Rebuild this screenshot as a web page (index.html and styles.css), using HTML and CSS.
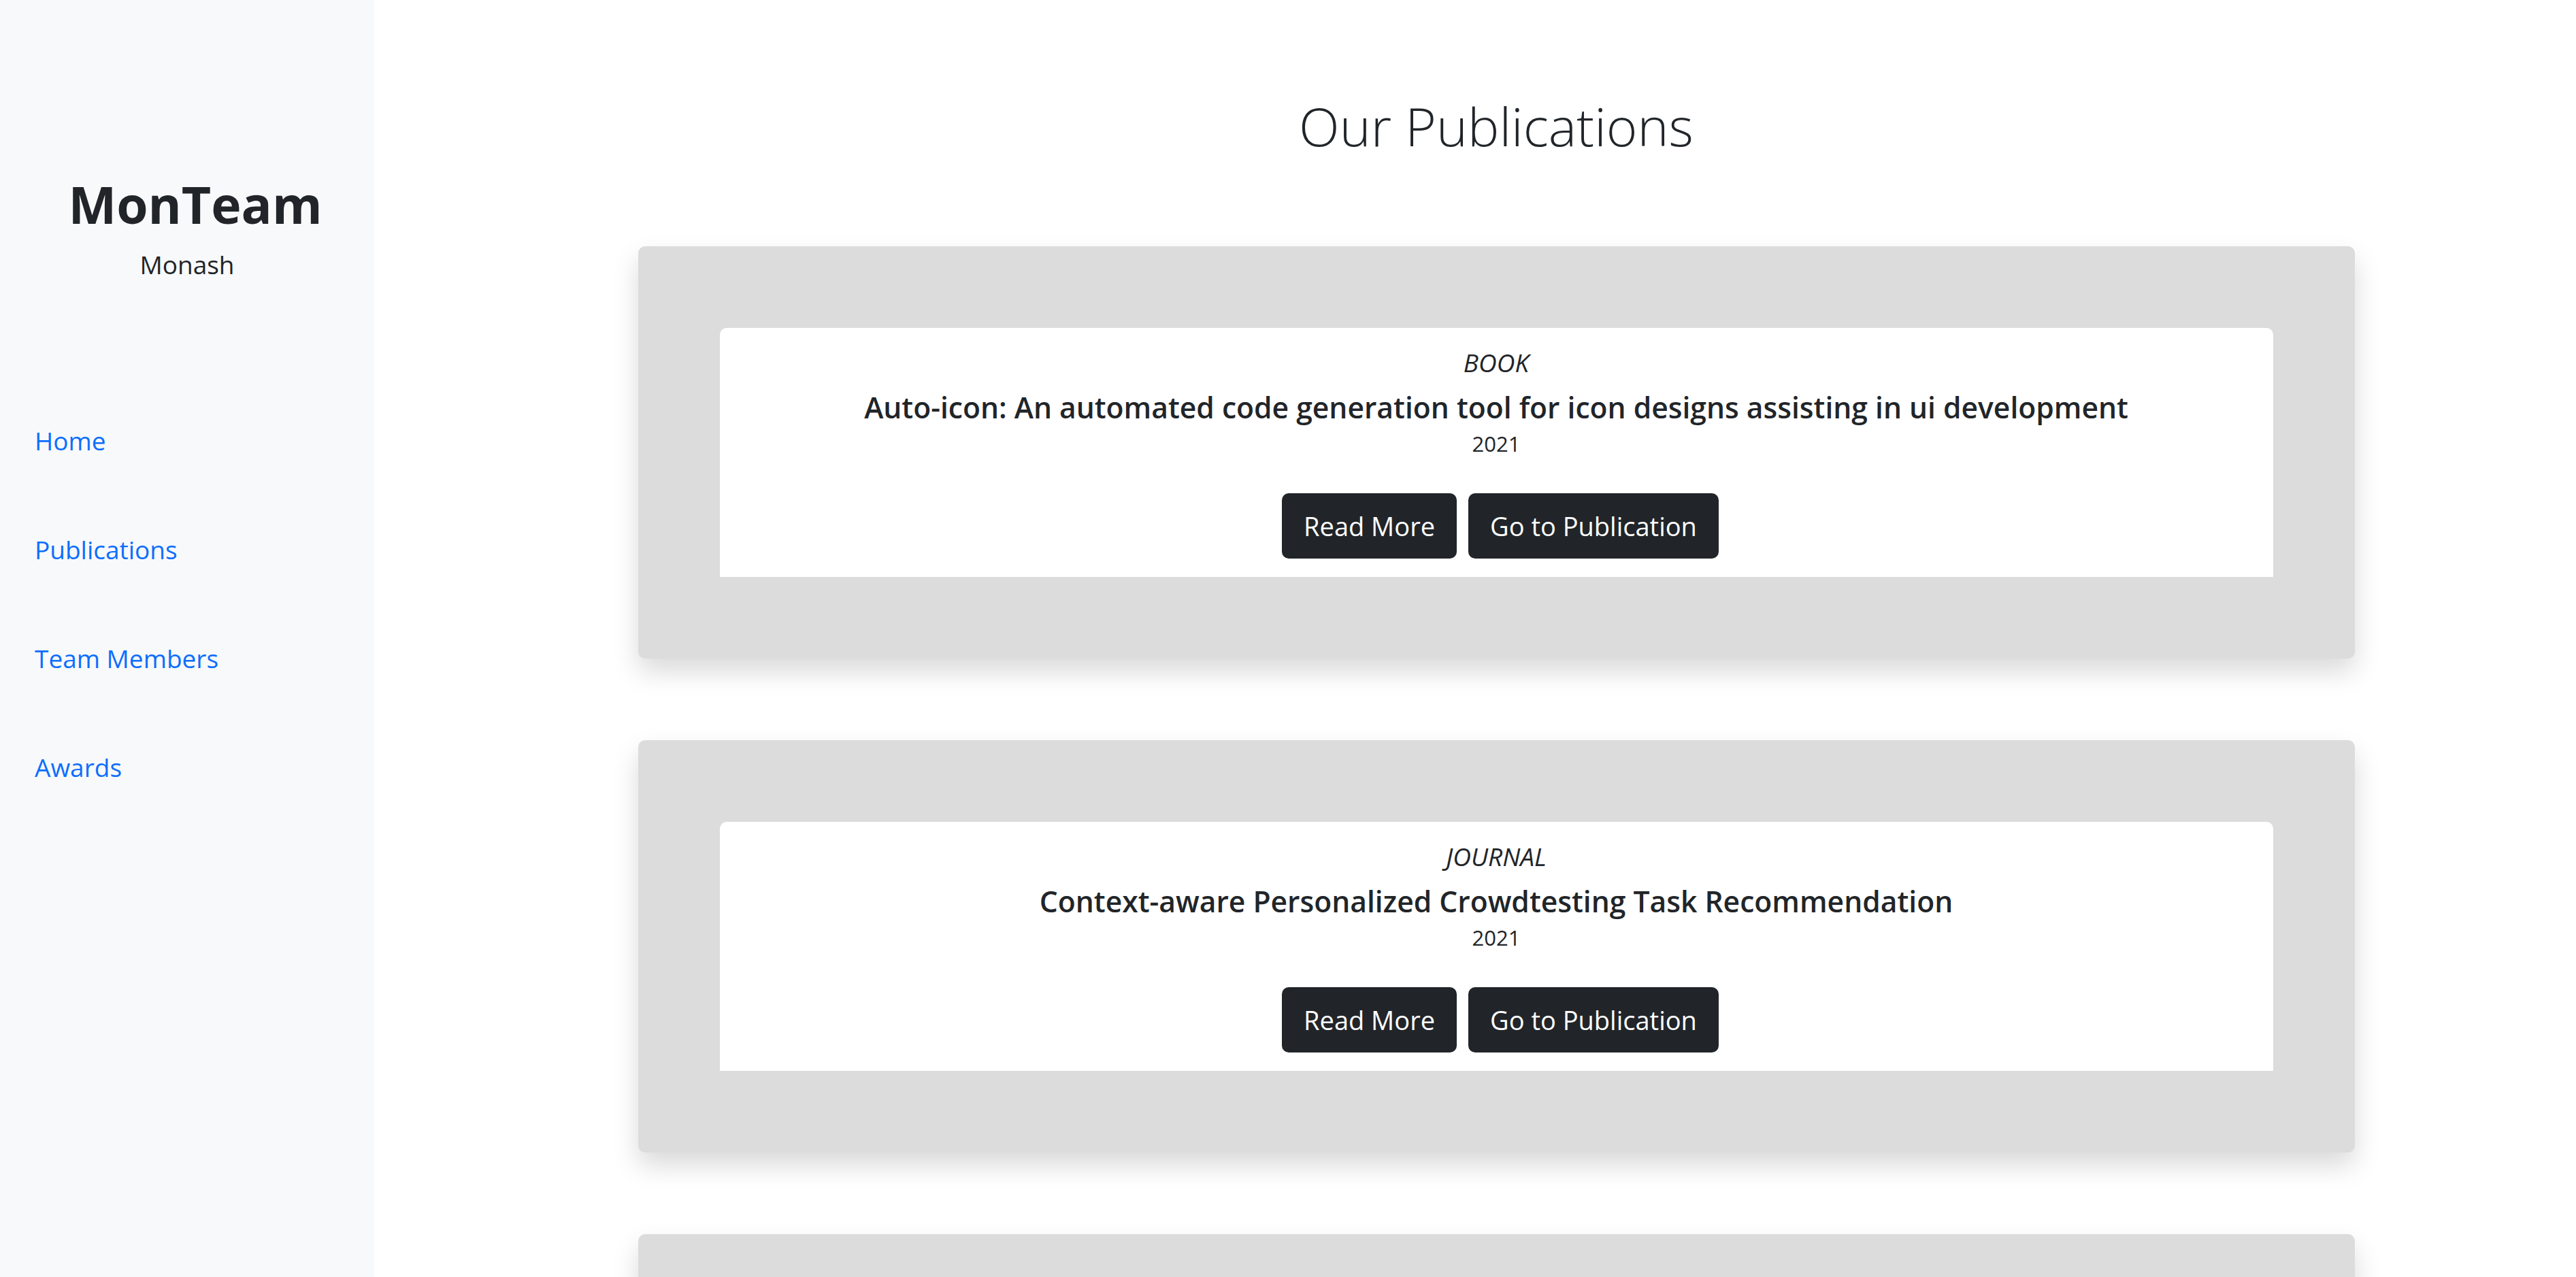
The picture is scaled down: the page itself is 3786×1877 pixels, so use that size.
FILE: index.html
```html
<!DOCTYPE html>
<html lang="en">
<head>
<meta charset="utf-8">
<title>MonTeam - Our Publications</title>
<link rel="stylesheet" href="styles.css">
</head>
<body>
<div class="layout">
  <aside class="sidebar">
    <div class="brand">
      <div class="brand-name">MonTeam</div>
      <div class="brand-sub">Monash</div>
    </div>
    <nav class="nav">
      <a class="nav-link" href="#">Home</a>
      <a class="nav-link" href="#">Publications</a>
      <a class="nav-link" href="#">Team Members</a>
      <a class="nav-link" href="#">Awards</a>
    </nav>
  </aside>
  <main class="main">
    <h1 class="page-title">Our Publications</h1>
    <div class="pub-list">
      <section class="pub-card">
        <div class="pub-body">
          <div class="pub-type">Book</div>
          <h5 class="pub-title">Auto-icon: An automated code generation tool for icon designs assisting in ui development</h5>
          <div class="pub-year">2021</div>
          <div class="pub-actions">
            <a class="btn" href="#">Read More</a>
            <a class="btn" href="#">Go to Publication</a>
          </div>
        </div>
      </section>
      <section class="pub-card">
        <div class="pub-body">
          <div class="pub-type">Journal</div>
          <h5 class="pub-title">Context-aware Personalized Crowdtesting Task Recommendation</h5>
          <div class="pub-year">2021</div>
          <div class="pub-actions">
            <a class="btn" href="#">Read More</a>
            <a class="btn" href="#">Go to Publication</a>
          </div>
        </div>
      </section>
      <section class="pub-card">
        <div class="pub-body">
          <div class="pub-type">Conference</div>
          <h5 class="pub-title">Publication</h5>
          <div class="pub-year">2021</div>
          <div class="pub-actions">
            <a class="btn" href="#">Read More</a>
            <a class="btn" href="#">Go to Publication</a>
          </div>
        </div>
      </section>
    </div>
  </main>
</div>
</body>
</html>
```
FILE: styles.css
```css
html, body {
  margin: 0;
  padding: 0;
}
body {
  font-family: "Open Sans", "Noto Sans", "Liberation Sans", sans-serif;
  color: #212529;
  background: #ffffff;
}
.layout {
  display: flex;
  height: 100vh;
  overflow: hidden;
}
.sidebar {
  flex: 0 0 550px;
  background: #f8f9fa;
  display: flex;
  flex-direction: column;
}
.brand {
  display: flex;
  flex-direction: column;
  align-items: center;
  padding-top: 255px;
}
.brand-name {
  font-size: 75px;
  font-weight: 700;
  line-height: 1.2;
  padding-left: 24px;
}
.brand-sub {
  font-size: 37px;
  line-height: 1.5;
  margin-top: 16px;
}
.nav {
  display: flex;
  flex-direction: column;
  padding-left: 51px;
  margin-top: 202px;
  gap: 102px;
}
.nav-link {
  color: #0d6efd;
  text-decoration: none;
  font-size: 37px;
  line-height: 58px;
}
.main {
  flex: 1;
  padding-left: 62px;
  display: flex;
  flex-direction: column;
  align-items: center;
}
.page-title {
  font-size: 78px;
  font-weight: 300;
  line-height: 1.2;
  margin: 139px 0 0;
}
.pub-list {
  display: flex;
  flex-direction: column;
  gap: 120px;
  margin-top: 129px;
}
.pub-card {
  width: 2523px;
  box-sizing: border-box;
  background: #dcdcdc;
  border-radius: 10px;
  padding: 120px;
  box-shadow: 0 19px 38px rgba(0, 0, 0, 0.15);
}
.pub-body {
  background: #ffffff;
  border-radius: 10px 10px 0 0;
  display: flex;
  flex-direction: column;
  align-items: center;
  padding: 22px 0 27px;
}
.pub-type {
  font-style: italic;
  text-transform: uppercase;
  font-size: 37px;
  line-height: 58px;
}
.pub-title {
  margin: 7px 0 0;
  font-size: 42.6px;
  font-weight: 600;
  line-height: 58px;
}
.pub-year {
  font-size: 31px;
  line-height: 51px;
  margin-top: 0;
}
.pub-actions {
  display: flex;
  gap: 17px;
  margin-top: 47px;
  padding-left: 12px;
}
.btn {
  display: inline-flex;
  align-items: center;
  height: 96px;
  box-sizing: border-box;
  padding: 0 32px;
  background: #212529;
  color: #ffffff;
  text-decoration: none;
  font-size: 38px;
  border-radius: 10px;
}
```
